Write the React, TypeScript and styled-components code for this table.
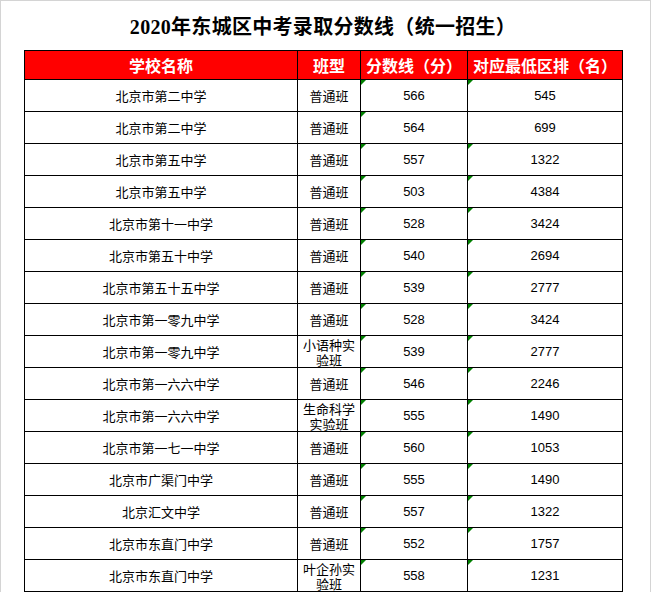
import styled, {createGlobalStyle} from 'styled-components';

const GlobalStyle = createGlobalStyle`
  html, body {
    margin: 0;
    padding: 0;
    background: #ffffff;
  }
`;

type Row = {
  school: string;
  kind: string;
  score: string;
  rank: string;
  rankFlag?: boolean;
};

const ROWS: Row[] = [
  {school: '北京市第二中学', kind: '普通班', score: '566', rank: '545', rankFlag: true},
  {school: '北京市第二中学', kind: '普通班', score: '564', rank: '699'},
  {school: '北京市第五中学', kind: '普通班', score: '557', rank: '1322', rankFlag: true},
  {school: '北京市第五中学', kind: '普通班', score: '503', rank: '4384', rankFlag: true},
  {school: '北京市第十一中学', kind: '普通班', score: '528', rank: '3424', rankFlag: true},
  {school: '北京市第五十中学', kind: '普通班', score: '540', rank: '2694', rankFlag: true},
  {school: '北京市第五十五中学', kind: '普通班', score: '539', rank: '2777', rankFlag: true},
  {school: '北京市第一零九中学', kind: '普通班', score: '528', rank: '3424', rankFlag: true},
  {school: '北京市第一零九中学', kind: '小语种实验班', score: '539', rank: '2777', rankFlag: true},
  {school: '北京市第一六六中学', kind: '普通班', score: '546', rank: '2246', rankFlag: true},
  {school: '北京市第一六六中学', kind: '生命科学实验班', score: '555', rank: '1490', rankFlag: true},
  {school: '北京市第一七一中学', kind: '普通班', score: '560', rank: '1053', rankFlag: true},
  {school: '北京市广渠门中学', kind: '普通班', score: '555', rank: '1490', rankFlag: true},
  {school: '北京汇文中学', kind: '普通班', score: '557', rank: '1322', rankFlag: true},
  {school: '北京市东直门中学', kind: '普通班', score: '552', rank: '1757', rankFlag: true},
  {school: '北京市东直门中学', kind: '叶企孙实验班', score: '558', rank: '1231', rankFlag: true},
];

const Page = styled.div`
  box-sizing: border-box;
  width: 651px;
  height: 592px;
  overflow: hidden;
  border-top: 1px solid #d4d4d4;
  border-left: 1px solid #d4d4d4;
  border-right: 1px solid #d4d4d4;
  padding-left: 23px;
`;

const Title = styled.h1`
  margin: 0;
  height: 49px;
  width: 598px;
  display: flex;
  align-items: center;
  justify-content: center;
  font-family: 'Liberation Serif', 'Noto Sans CJK SC', serif;
  font-size: 20px;
  font-weight: bold;
  color: #000000;
  letter-spacing: 0.3px;
`;

const Sheet = styled.table`
  width: 598px;
  table-layout: fixed;
  border-collapse: collapse;
  border: 1px solid #000000;
`;

const HeadCell = styled.th`
  height: 28px;
  padding: 0;
  background: #ff0000;
  color: #ffffff;
  border: 1px solid #000000;
  font-family: 'Noto Sans CJK SC', sans-serif;
  font-size: 16px;
  font-weight: bold;
  text-align: center;
  vertical-align: middle;
  line-height: 18px;
`;

const Cell = styled.td<{$flag?: boolean; $num?: boolean}>`
  position: relative;
  height: 31px;
  padding: 0 2px;
  border: 1px solid #000000;
  font-family: ${p =>
    p.$num ? "'Liberation Sans', Arial, sans-serif" : "'Noto Sans CJK SC', sans-serif"};
  font-size: 13px;
  line-height: 15px;
  color: #000000;
  text-align: center;
  vertical-align: middle;

  &::before {
    content: '';
    display: ${p => (p.$flag ? 'block' : 'none')};
    position: absolute;
    top: 0;
    left: 0;
    width: 0;
    height: 0;
    border-top: 5px solid #008000;
    border-right: 5px solid transparent;
  }
`;

const App = () => {
  return (
    <>
      <GlobalStyle />
      <Page>
        <Title>2020年东城区中考录取分数线（统一招生）</Title>
        <Sheet>
          <colgroup>
            <col style={{width: 273}} />
            <col style={{width: 63}} />
            <col style={{width: 107}} />
            <col style={{width: 155}} />
          </colgroup>
          <thead>
            <tr>
              <HeadCell>学校名称</HeadCell>
              <HeadCell>班型</HeadCell>
              <HeadCell>分数线（分）</HeadCell>
              <HeadCell>对应最低区排（名）</HeadCell>
            </tr>
          </thead>
          <tbody>
            {ROWS.map((r, i) => (
              <tr key={i}>
                <Cell>{r.school}</Cell>
                <Cell>{r.kind}</Cell>
                <Cell $num $flag>
                  {r.score}
                </Cell>
                <Cell $num $flag={r.rankFlag}>
                  {r.rank}
                </Cell>
              </tr>
            ))}
          </tbody>
        </Sheet>
      </Page>
    </>
  );
};

export default App;
